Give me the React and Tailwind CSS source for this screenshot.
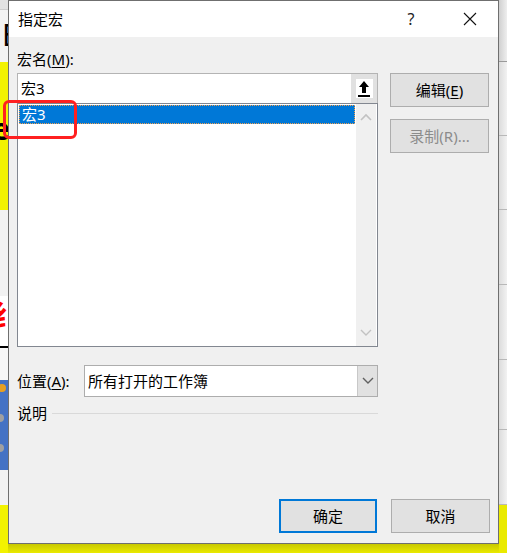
import React from "react";

const F = { fontFamily: '"Noto Sans", "Noto Sans CJK SC", sans-serif' };

function Btn({ children, className = "", disabled = false, primary = false }) {
  return (
    <div
      className={
        "h-[34px] flex items-center justify-center bg-[#e1e1e1] text-[15px] " +
        (primary ? "border-2 border-[#0078d7] " : "border border-[#adadad] ") +
        (disabled ? "text-[#8c8c8c] " : "text-black ") +
        className
      }
    >
      {children}
    </div>
  );
}

function ChevUp() {
  return (
    <svg width="12" height="8" viewBox="0 0 12 8">
      <polyline points="1,7 6,2 11,7" fill="none" stroke="#c2c2c2" strokeWidth="1.6" />
    </svg>
  );
}
function ChevDown({ color = "#c2c2c2" }) {
  return (
    <svg width="12" height="8" viewBox="0 0 12 8">
      <polyline points="1,1 6,6 11,1" fill="none" stroke={color} strokeWidth="1.4" />
    </svg>
  );
}

export default function App() {
  return (
    <div className="relative w-[507px] h-[553px] overflow-hidden flex bg-white" style={F}>
      {/* left background strip */}
      <div className="w-[8px] flex flex-col shrink-0 overflow-hidden">
        <div className="h-[10px] bg-[#e3e3e3] border-b border-[#cfcfcf]" />
        <div className="h-[52px] bg-[#f3f3f3] overflow-hidden">
          <div className="text-[30px] leading-[50px] text-black pl-[2px]">E</div>
        </div>
        <div className="h-[148px] bg-[#f2f200] overflow-hidden">
          <div className="text-[30px] font-bold leading-[30px] mt-[52px] ml-[-8px] text-black">e</div>
        </div>
        <div className="h-[86px] bg-[#f2f2f2]" />
        <div className="h-[50px] bg-white overflow-hidden">
          <div className="text-[30px] font-bold leading-[40px] text-[#ff0000] ml-[-10px]">纟</div>
        </div>
        <div className="h-[2px] bg-black" />
        <div className="h-[32px] bg-[#f7f7f7]" />
        <div className="h-[90px] bg-[#4472c4] flex flex-col gap-[22px] pt-[4px]">
          <div className="w-[8px] h-[8px] rounded-full bg-[#e8a020] ml-[-2px]" />
          <div className="w-[8px] h-[8px] rounded-full bg-[#a0a0a0] ml-[-4px]" />
          <div className="w-[8px] h-[8px] rounded-full bg-[#a0a0a0] ml-[-4px]" />
        </div>
        <div className="h-[35px] bg-[#f2f2f2]" />
        <div className="flex-1 bg-[#f2f200]" />
      </div>

      {/* dialog column */}
      <div className="w-[491px] flex flex-col shrink-0">
        <div className="h-[544px] border border-[#6f6f6f] bg-[#f0f0f0] flex flex-col">
          {/* title bar */}
          <div className="h-[36px] bg-white flex items-center pl-[9px] shrink-0">
            <span className="text-[15px] text-black">指定宏</span>
            <div className="ml-auto w-[46px] flex items-center justify-center text-[16px] text-[#222]">?</div>
            <div className="ml-[13px] mr-[5px] w-[46px] flex items-center justify-center">
              <svg width="14" height="14" viewBox="0 0 14 14">
                <path d="M1 1 L13 13 M13 1 L1 13" stroke="#111" strokeWidth="1.1" />
              </svg>
            </div>
          </div>

          {/* content */}
          <div className="flex-1 flex flex-col px-[8px]">
            <div className="flex gap-[12px]">
              {/* left column */}
              <div className="w-[361px] flex flex-col">
                <div className="mt-[12px] h-[20px] leading-[20px] text-[15px] text-black">
                  宏名(<span className="underline underline-offset-2">M</span>):
                </div>
                <div className="mt-[4px] h-[30px] flex bg-white border border-b-0 border-[#b4b4b4]">
                  <div className="flex-1 flex items-center pl-[3px] text-[15px] text-black">宏3</div>
                  <div className="w-[26px] bg-[#e1e1e1] flex items-center justify-center">
                    <div className="w-[17px] h-[19px] bg-white flex items-center justify-center">
                      <svg width="12" height="16" viewBox="0 0 12 16">
                        <path d="M6 0 L11 6 L8 6 L8 12 L4 12 L4 6 L1 6 Z" fill="#000" />
                        <rect x="0" y="14" width="12" height="2" fill="#000" />
                      </svg>
                    </div>
                  </div>
                </div>
                <div className="h-[244px] flex bg-white border border-[#828790]">
                  <div className="flex-1 p-[1px]">
                    <div className="h-[19px] bg-[#0078d7] border border-dotted border-[#f0a050] flex items-center pl-[2px] text-[15px] text-white">
                      宏3
                    </div>
                  </div>
                  <div className="w-[20px] mr-[1px] bg-[#f0f0f0] flex flex-col items-center justify-between py-[9px]">
                    <ChevUp />
                    <ChevDown />
                  </div>
                </div>

                <div className="mt-[18px] h-[32px] flex items-center">
                  <div className="w-[67px] text-[15px] text-black">
                    位置(<span className="underline underline-offset-2">A</span>):
                  </div>
                  <div className="flex-1 h-[32px] flex bg-white border border-[#adadad]">
                    <div className="flex-1 flex items-center pl-[3px] text-[15px] text-black">所有打开的工作簿</div>
                    <div className="w-[20px] bg-[#e1e1e1] border-l border-[#c8c8c8] flex items-center justify-center">
                      <ChevDown color="#606060" />
                    </div>
                  </div>
                </div>

                <div className="mt-[6px] h-[20px] flex items-center">
                  <span className="text-[15px] text-black">说明</span>
                  <div className="flex-1 h-px bg-[#d9d9d9] ml-[5px]" />
                </div>
              </div>

              {/* right column */}
              <div className="w-[99px] flex flex-col">
                <Btn className="mt-[36px] h-[33px]">
                  编辑(<span className="underline underline-offset-2">E</span>)
                </Btn>
                <Btn className="mt-[12px] h-[33px]" disabled>
                  录制(R)...
                </Btn>
              </div>
            </div>

            <div className="mt-auto mb-[10px] flex justify-end gap-[14px]">
              <Btn primary className="w-[98px]">确定</Btn>
              <Btn className="w-[99px]">取消</Btn>
            </div>
          </div>
        </div>
        <div className="flex-1 bg-gradient-to-b from-[#c8c800] to-[#eaea00]" />
      </div>

      {/* right background strip */}
      <div className="w-[8px] flex flex-col shrink-0">
        <div className="h-[62px] bg-gradient-to-r from-[#d0d0d0] to-[#eeeeee] border-b border-[#9a9a9a]" />
        <div className="h-[74px] bg-gradient-to-r from-[#dcdcdc] to-[#f2f2f2] border-b border-[#b8b8b8]" />
        <div className="h-[74px] bg-gradient-to-r from-[#dcdcdc] to-[#f2f2f2] border-b border-[#b8b8b8]" />
        <div className="h-[75px] bg-gradient-to-r from-[#dcdcdc] to-[#f2f2f2] border-b border-[#b8b8b8]" />
        <div className="h-[75px] bg-gradient-to-r from-[#dcdcdc] to-[#f2f2f2] border-b border-[#b8b8b8]" />
        <div className="h-[70px] bg-gradient-to-r from-[#dcdcdc] to-[#f2f2f2] border-b border-[#b8b8b8]" />
        <div className="h-[75px] bg-gradient-to-r from-[#dcdcdc] to-[#f2f2f2] border-b border-[#b8b8b8]" />
        <div className="flex-1 bg-[#eaea00]" />
      </div>

      {/* red annotation box */}
      <div className="absolute left-[3px] top-[100px] w-[74px] h-[39px] border-[3px] border-[#ff2020] rounded-[6px]" />
    </div>
  );
}
